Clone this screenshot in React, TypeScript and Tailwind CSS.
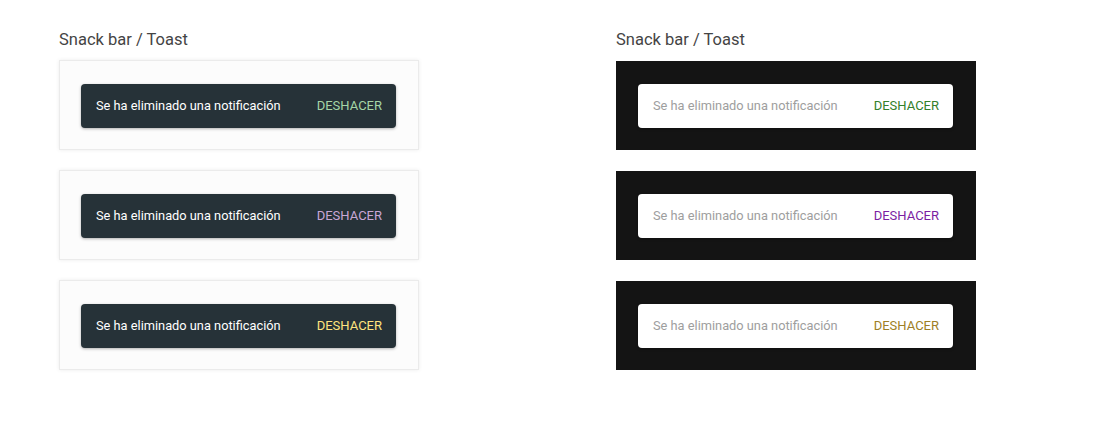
const lightActions = ["text-[#a5d6a7]", "text-[#c9a7d6]", "text-[#ffe57f]"]
const darkActions = ["text-[#33802a]", "text-[#7b1fa2]", "text-[#9e7f26]"]

function Snack({ dark, action }: { dark: boolean; action: string }) {
  return (
    <div
      className={
        dark
          ? "w-[315px] h-[44px] rounded-[4px] bg-white flex items-center justify-between pl-[15px] pr-[14px] shadow-[0_1px_3px_rgba(0,0,0,0.3)]"
          : "w-[315px] h-[44px] rounded-[4px] bg-[#263238] flex items-center justify-between pl-[15px] pr-[14px] shadow-[0_1px_3px_rgba(0,0,0,0.3)]"
      }
    >
      <span className={dark ? "text-[12.8px] text-[#9e9e9e]" : "text-[12.8px] text-white"}>
        Se ha eliminado una notificación
      </span>
      <span className={"text-[13px] " + action}>DESHACER</span>
    </div>
  )
}

function Column({ dark, actions }: { dark: boolean; actions: string[] }) {
  return (
    <div className="flex flex-col">
      <h2 className="text-[16.5px] leading-[20px] text-[#444] h-[30px]">Snack bar / Toast</h2>
      <div className={dark ? "flex flex-col gap-[21px] pt-px" : "flex flex-col gap-[20px]"}>
        {actions.map((a, i) => (
          <div
            key={i}
            className={
              dark
                ? "w-[360px] h-[89px] bg-[#141414] pl-[22px] pt-[23px]"
                : "w-[360px] h-[90px] bg-[#fcfcfc] border border-[#ebebeb] shadow-[0_0_4px_rgba(0,0,0,0.08)] pl-[21px] pt-[23px]"
            }
          >
            <Snack dark={dark} action={a} />
          </div>
        ))}
      </div>
    </div>
  )
}

export default function App() {
  return (
    <div className="w-[1099px] h-[440px] bg-white pt-[30px] pl-[59px] flex gap-[197px] font-['Roboto',sans-serif]">
      <Column dark={false} actions={lightActions} />
      <Column dark={true} actions={darkActions} />
    </div>
  )
}
